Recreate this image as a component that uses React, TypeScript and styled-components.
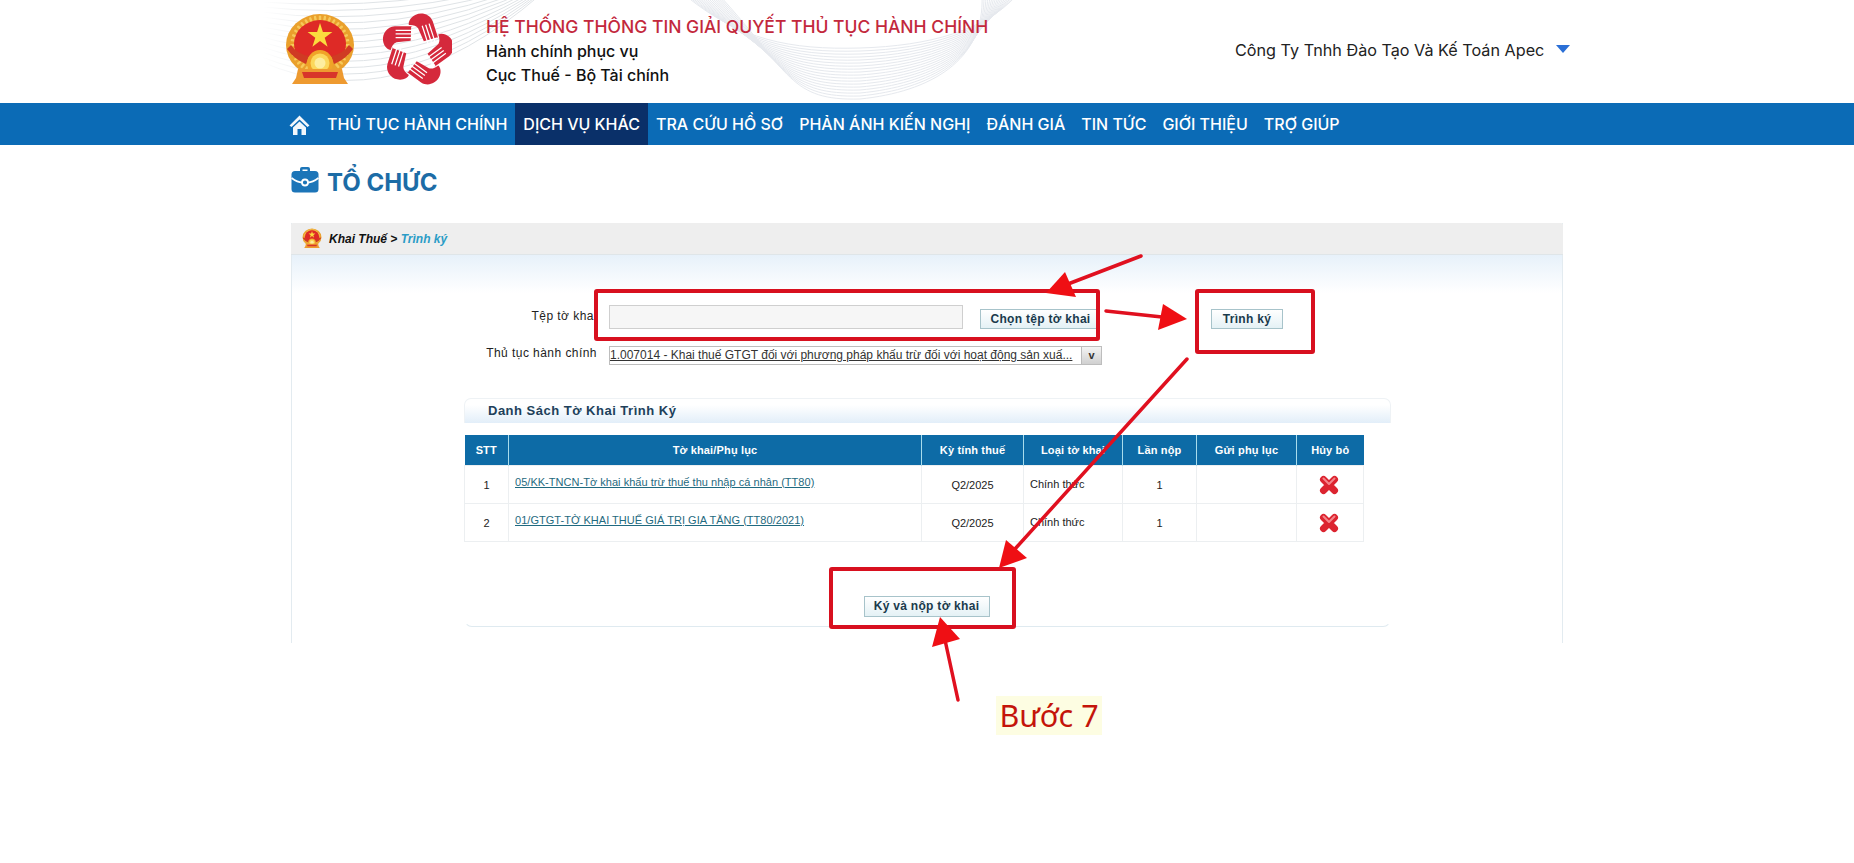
import React from "react";
import styled, { createGlobalStyle } from "styled-components";

const Global = createGlobalStyle`
  html, body { margin: 0; padding: 0; background: #fff; }
  body { font-family: "Liberation Sans", Arial, sans-serif; overflow: hidden; }
  * { box-sizing: border-box; }
`;

const Page = styled.div`
  position: relative;
  width: 1854px;
  height: 863px;
  overflow: hidden;
`;

const Header = styled.header`
  position: relative;
  height: 103px;
  display: flex;
  align-items: flex-start;
  padding: 12px 0 0 284px;
  background: #fff;
`;

const Swirl = styled.svg`
  position: absolute;
  inset: 0;
  width: 1854px;
  height: 103px;
`;

const LogoBox = styled.div<{ $w: number }>`
  position: relative;
  width: ${(p) => p.$w}px;
  flex: none;
  svg { display: block; }
`;

const Titles = styled.div`
  position: relative;
  margin-left: 34px;
  padding-top: 3px;
  width: 660px;
  font-family: Inter, "Noto Sans", sans-serif;
`;

const MainTitle = styled.div`
  font-size: 17.5px;
  line-height: 24px;
  font-weight: 500;
  color: #c3283c;
  white-space: nowrap;
`;

const SubTitle = styled.div`
  font-size: 16px;
  line-height: 24px;
  font-weight: 500;
  color: #111;
`;

const Account = styled.div`
  position: relative;
  margin-left: 89px;
  padding-top: 26px;
  display: flex;
  align-items: center;
  gap: 12px;
  font-family: Inter, "Noto Sans", sans-serif;
  font-size: 16.2px;
  line-height: 24px;
  font-weight: 400;
  color: #222;
  white-space: nowrap;
`;

const Caret = styled.span`
  width: 0;
  height: 0;
  margin-top: -3px;
  border-left: 7px solid transparent;
  border-right: 7px solid transparent;
  border-top: 8px solid #2a6fd6;
`;

const Nav = styled.nav`
  height: 42px;
  display: flex;
  align-items: stretch;
  padding-left: 289px;
  background: #0b6bb6;
`;

const HomeLink = styled.a`
  width: 30px;
  display: flex;
  align-items: center;
  svg { display: block; margin-top: 2px; }
`;

const NavItem = styled.a<{ $active?: boolean }>`
  display: flex;
  align-items: center;
  padding: 0 8px;
  font-family: Inter, "Noto Sans", sans-serif;
  font-size: 16px;
  font-weight: 500;
  color: #fff;
  white-space: nowrap;
  background: ${(p) => (p.$active ? "#0a3069" : "transparent")};
`;

const PageTitle = styled.div`
  height: 78px;
  padding: 21px 0 0 291px;
  display: flex;
  align-items: flex-start;
  gap: 8px;
  font-family: Inter, "Noto Sans", sans-serif;
  font-size: 24px;
  line-height: 34px;
  font-weight: 700;
  color: #1c6ca6;
  svg { display: block; }
`;

const Panel = styled.section`
  margin-left: 291px;
  width: 1272px;
  height: 420px;
  border-left: 1px solid #e3ebf0;
  border-right: 1px solid #e3ebf0;
`;

const PanelHead = styled.div`
  height: 32px;
  margin: 0 -1px;
  padding-left: 11px;
  display: flex;
  align-items: center;
  gap: 7px;
  background: #eeeeee;
  border-bottom: 1px solid #dfe5e8;
  border-radius: 2px 2px 0 0;
  font-size: 12px;
  font-style: italic;
  font-weight: 700;
  color: #111;
  svg { display: block; }
`;

const Crumb = styled.span`
  color: #2a9cc6;
`;

const PanelBody = styled.div`
  height: 388px;
  padding-top: 50px;
  background: linear-gradient(#e7f1fa 0, #fff 38px);
`;

const FormRow = styled.div<{ $gap?: number }>`
  display: flex;
  align-items: flex-start;
  margin-top: ${(p) => p.$gap ?? 0}px;
`;

const Label = styled.label<{ $top: number }>`
  width: 305px;
  flex: none;
  padding-top: ${(p) => p.$top}px;
  text-align: right;
  font-size: 12px;
  line-height: 14px;
  letter-spacing: 0.45px;
  color: #222;
  white-space: nowrap;
`;

const FileInput = styled.div`
  margin-left: 12px;
  width: 354px;
  height: 24px;
  background: #f6f6f6;
  border: 1px solid #cfcfcf;
`;

const Btn = styled.button<{ $w: number; $h?: number; $left?: number; $top?: number; $pad?: number }>`
  display: block;
  width: ${(p) => p.$w}px;
  height: ${(p) => p.$h ?? 20}px;
  margin-left: ${(p) => p.$left ?? 0}px;
  margin-top: ${(p) => p.$top ?? 0}px;
  padding: 0 0 0 ${(p) => p.$pad ?? 0}px;
  border: 1px solid #a7c3ca;
  background: linear-gradient(#ffffff, #e4f1f5);
  font-family: "Liberation Sans", Arial, sans-serif;
  font-size: 12px;
  font-weight: 700;
  letter-spacing: 0.3px;
  color: #1a3a4c;
  white-space: nowrap;
`;

const SelectBox = styled.div`
  margin-left: 12px;
  width: 493px;
  height: 19px;
  display: flex;
  border: 1px solid #bdbdbd;
  background: #fff;
`;

const SelectText = styled.span`
  flex: 1;
  min-width: 0;
  font-size: 12px;
  line-height: 17px;
  letter-spacing: 0;
  color: #333;
  text-decoration: underline;
  white-space: nowrap;
`;

const SelectArrow = styled.span`
  width: 20px;
  flex: none;
  text-align: center;
  font-size: 11px;
  font-weight: 700;
  line-height: 16px;
  color: #333;
  border-left: 1px solid #bbb;
  background: linear-gradient(#f4f4f4, #d0d0d0);
`;

const ListBox = styled.div`
  margin: 33px 0 0 172px;
  width: 927px;
  height: 229px;
  padding-bottom: 9px;
  border: 1px solid transparent;
  border-top: none;
  border-bottom-color: #dfeaf0;
  border-radius: 8px;
`;

const ListTitle = styled.div`
  height: 25px;
  margin: 0 -1px;
  padding-left: 23px;
  border: 1px solid #eef2f5;
  border-bottom: none;
  border-radius: 7px 7px 0 0;
  background: linear-gradient(#ffffff 25%, #e2eef9);
  font-size: 13px;
  line-height: 24px;
  font-weight: 700;
  letter-spacing: 0.5px;
  color: #20405a;
`;

const Table = styled.table`
  margin: 12px 0 0 -1px;
  width: 899px;
  table-layout: fixed;
  border-collapse: collapse;
  font-size: 11px;
  color: #222;
`;

const Th = styled.th<{ $w: number }>`
  width: ${(p) => p.$w}px;
  height: 30px;
  padding: 0;
  background: #0d6ba6;
  color: #fff;
  font-size: 11px;
  font-weight: 700;
  letter-spacing: 0.15px;
  border-left: 1px solid #a8dcec;
  &:first-child { border-left: none; }
`;

const Td = styled.td<{ $left?: boolean }>`
  height: 38px;
  padding: ${(p) => (p.$left ? "0 0 0 6px" : "1px 0 0")};
  text-align: ${(p) => (p.$left ? "left" : "center")};
  border: 1px solid #eceff1;
`;

const IconCell = styled(Td)`
  padding: 1px 3px 0 0;
  svg { display: block; margin: 0 auto; }
`;

const LinkText = styled.a`
  display: block;
  margin-top: -5px;
  color: #1f6a80;
  text-decoration: underline;
  font-size: 11px;
  letter-spacing: 0.03px;
  white-space: nowrap;
`;

const SubmitRow = styled.div`
  margin-top: 54px;
  padding-right: 2px;
  display: flex;
  justify-content: center;
`;

const Overlay = styled.svg`
  position: absolute;
  left: 0;
  top: 0;
  width: 1854px;
  height: 863px;
  pointer-events: none;
`;

const StepNote = styled.div`
  position: absolute;
  left: 996px;
  top: 696px;
  width: 106px;
  height: 39px;
  background: #fdfde2;
  text-align: center;
  font-family: "Noto Sans", "Open Sans", sans-serif;
  font-size: 30.5px;
  line-height: 38px;
  color: #c4140a;
  white-space: nowrap;
`;

const rimAngles = Array.from({ length: 30 }, (_, i) => -150 + i * 10);

const Emblem = ({ size }: { size: number }) => (
  <svg width={size} height={size * 1.03} viewBox="0 0 72 74">
    <ellipse cx="36" cy="33" rx="34" ry="31" fill="#eaa02c" />
    <g stroke="#f7c95a" strokeWidth="2.4" strokeLinecap="round">
      {rimAngles.map((a) => (
        <line key={a} x1="36" y1="4.5" x2="36" y2="7.5" transform={`rotate(${a} 36 33)`} />
      ))}
    </g>
    <path d="M10 32 A26 24 0 0 1 62 32 Q62 40 56 45 H16 Q10 40 10 32 Z" fill="#de2a26" />
    <polygon points="36,11 38.9,20 48.4,20 40.7,25.6 43.6,34.6 36,29 28.4,34.6 31.3,25.6 23.6,20 33.1,20" fill="#fbdc3e" />
    <path d="M3 37 Q10 47 22 52 L25 44 Q13 42 7 33 Z" fill="#d03a24" />
    <path d="M69 37 Q62 47 50 52 L47 44 Q59 42 65 33 Z" fill="#d03a24" />
    <circle cx="36" cy="51" r="13" fill="#f0a428" />
    <circle cx="36" cy="51" r="9.5" fill="#fbd85c" />
    <circle cx="36" cy="51" r="5.5" fill="#fdeea0" />
    <path d="M14 57 H58 L60 66 L64 72 H8 L12 66 Z" fill="#ee9a30" />
    <path d="M18 60 H54 L52 66 H20 Z" fill="#d8352a" />
  </svg>
);

const handAngles = [0, 72, 144, 216, 288];

const StarLogo = () => (
  <svg width={70} height={76} viewBox="-36 -38 72 76">
    {handAngles.map((a) => (
      <g key={a} transform={`rotate(${a})`}>
        <path d="M-4.5 -24.5 L-23 -24.5 C-31 -24 -35.5 -17 -35 -10 C-34.5 -4 -30 0 -27 0 C-26 -4 -24 -7 -21 -8 L-6.5 -9.5 L-6 -24 Z" fill="#d5293c" />
        <path d="M-22 -20.2 L-3 -20.2 M-22 -16.5 L-3 -16.5 M-22 -12.8 L-3 -12.8" stroke="#fff" strokeWidth="1.3" fill="none" />
      </g>
    ))}
  </svg>
);

const HomeIcon = () => (
  <svg width="21" height="20" viewBox="0 0 21 20">
    <path d="M10.5 0.5 L0.5 10.5 L2.5 12 L10.5 4.5 L18.5 12 L20.5 10.5 Z" fill="#f2f7fb" />
    <path d="M4 12.5 L10.5 6.5 L17 12.5 V20 H12.5 V14 H8.5 V20 H4 Z" fill="#f2f7fb" />
  </svg>
);

const Briefcase = () => (
  <svg width="28" height="27" viewBox="0 0 28 27">
    <path d="M9 6 V3 Q9 1 11 1 H17 Q19 1 19 3 V6 H16.5 V3.5 H11.5 V6 Z" fill="#1c75b8" />
    <rect x="0.5" y="5" width="27" height="21.5" rx="3.5" fill="#1c75b8" />
    <path d="M0.5 12 C6 16 9 16.5 11 16.5 M27.5 12 C22 16 19 16.5 17 16.5" stroke="#fff" strokeWidth="2" fill="none" />
    <circle cx="14" cy="16.5" r="3" fill="#1c75b8" stroke="#fff" strokeWidth="1.8" />
  </svg>
);

const CancelIcon = () => (
  <svg width="20" height="20" viewBox="0 0 20 20">
    <path d="M4.5 4.5 L15.5 15.5 M15.5 4.5 L4.5 15.5" stroke="#dc2430" strokeWidth="7" strokeLinecap="round" />
    <path d="M4.5 3.5 L10 9 L15.5 3.5" stroke="#f4858a" strokeWidth="2" strokeLinecap="round" strokeLinejoin="round" fill="none" />
  </svg>
);

const navItems = ["TRA CỨU HỒ SƠ", "PHẢN ÁNH KIẾN NGHỊ", "ĐÁNH GIÁ", "TIN TỨC", "GIỚI THIỆU", "TRỢ GIÚP"];

const rows = [
  { stt: 1, name: "05/KK-TNCN-Tờ khai khấu trừ thuế thu nhập cá nhân (TT80)" },
  { stt: 2, name: "01/GTGT-TỜ KHAI THUẾ GIÁ TRỊ GIA TĂNG (TT80/2021)" },
];

const leftLines = Array.from({ length: 15 }, (_, i) => i);
const midLines = Array.from({ length: 18 }, (_, i) => i);

export default function App() {
  return (
    <Page>
      <Global />
      <Header>
        <Swirl viewBox="0 0 1854 103">
          <defs>
            <linearGradient id="fade" gradientUnits="userSpaceOnUse" x1="262" y1="0" x2="340" y2="0">
              <stop offset="0" stopColor="#dfe3e6" stopOpacity="0" />
              <stop offset="1" stopColor="#dfe3e6" />
            </linearGradient>
          </defs>
          {leftLines.map((i) => (
            <path
              key={i}
              d={`M262 ${i * 5 - 8} Q395 ${i * 9 - 6} 540 ${-26 + i * 1.5}`}
              fill="none"
              stroke="url(#fade)"
              strokeWidth="1"
            />
          ))}
          {midLines.map((i) => (
            <path
              key={i}
              d={`M${686 + i * 2} -4 C${740 + i * 3} ${40 + i * 2} ${790} ${50 + i * 3} ${860} ${48 + i * 3} C${930} ${46 + i * 2.7} ${985} ${30 + i * 1.8} ${1016 - i * 2} -4`}
              fill="none"
              stroke="#e6e9ee"
              strokeWidth="1"
            />
          ))}
        </Swirl>
        <LogoBox $w={98}>
          <Emblem size={72} />
        </LogoBox>
        <LogoBox $w={70}>
          <StarLogo />
        </LogoBox>
        <Titles>
          <MainTitle>HỆ THỐNG THÔNG TIN GIẢI QUYẾT THỦ TỤC HÀNH CHÍNH</MainTitle>
          <SubTitle>Hành chính phục vụ</SubTitle>
          <SubTitle>Cục Thuế - Bộ Tài chính</SubTitle>
        </Titles>
        <Account>
          Công Ty Tnhh Đào Tạo Và Kế Toán Apec
          <Caret />
        </Account>
      </Header>
      <Nav>
        <HomeLink>
          <HomeIcon />
        </HomeLink>
        <NavItem>THỦ TỤC HÀNH CHÍNH</NavItem>
        <NavItem $active>DỊCH VỤ KHÁC</NavItem>
        {navItems.map((n) => (
          <NavItem key={n}>{n}</NavItem>
        ))}
      </Nav>
      <PageTitle>
        <Briefcase />
        TỔ CHỨC
      </PageTitle>
      <Panel>
        <PanelHead>
          <Emblem size={20} />
          <span>
            Khai Thuế &gt; <Crumb>Trình ký</Crumb>
          </span>
        </PanelHead>
        <PanelBody>
          <FormRow>
            <Label $top={4}>Tệp tờ khai</Label>
            <FileInput />
            <Btn $w={118} $left={17} $top={4} $pad={3}>
              Chọn tệp tờ khai
            </Btn>
            <Btn $w={72} $left={113} $top={4}>
              Trình ký
            </Btn>
          </FormRow>
          <FormRow $gap={17}>
            <Label $top={0}>Thủ tục hành chính</Label>
            <SelectBox>
              <SelectText>1.007014 - Khai thuế GTGT đối với phương pháp khấu trừ đối với hoạt động sản xuấ...</SelectText>
              <SelectArrow>v</SelectArrow>
            </SelectBox>
          </FormRow>
          <ListBox>
            <ListTitle>Danh Sách Tờ Khai Trình Ký</ListTitle>
            <Table>
              <thead>
                <tr>
                  <Th $w={44}>STT</Th>
                  <Th $w={413}>Tờ khai/Phụ lục</Th>
                  <Th $w={102}>Kỳ tính thuế</Th>
                  <Th $w={99}>Loại tờ khai</Th>
                  <Th $w={74}>Lần nộp</Th>
                  <Th $w={100}>Gửi phụ lục</Th>
                  <Th $w={67}>Hủy bỏ</Th>
                </tr>
              </thead>
              <tbody>
                {rows.map((r) => (
                  <tr key={r.stt}>
                    <Td>{r.stt}</Td>
                    <Td $left>
                      <LinkText>{r.name}</LinkText>
                    </Td>
                    <Td>Q2/2025</Td>
                    <Td $left>Chính thức</Td>
                    <Td>1</Td>
                    <Td />
                    <IconCell>
                      <CancelIcon />
                    </IconCell>
                  </tr>
                ))}
              </tbody>
            </Table>
            <SubmitRow>
              <Btn $w={126} $h={21}>
                Ký và nộp tờ khai
              </Btn>
            </SubmitRow>
          </ListBox>
        </PanelBody>
      </Panel>
      <Overlay viewBox="0 0 1854 863">
        <g fill="none" stroke="#d8101f" strokeWidth="4" strokeLinejoin="round">
          <rect x="596" y="291" width="502" height="48" rx="1" />
          <rect x="1197" y="291" width="116" height="61" rx="1" />
          <rect x="831" y="569" width="183" height="58" rx="1" />
        </g>
        <g stroke="#e0101f" strokeWidth="3.5" strokeLinecap="round">
          <line x1="1141" y1="256" x2="1068" y2="284" />
          <line x1="1106" y1="311" x2="1162" y2="317" />
          <line x1="1187" y1="359" x2="1014" y2="550" />
          <line x1="958" y1="700" x2="945" y2="640" />
        </g>
        <g fill="#ef0f14">
          <polygon points="1046,293 1065,272 1076,297" />
          <polygon points="1187,319 1163,304 1158,330" />
          <polygon points="999,568 1027,558 1006,540" />
          <polygon points="940,617 932,647 960,639" />
        </g>
      </Overlay>
      <StepNote>Bước 7</StepNote>
    </Page>
  );
}
